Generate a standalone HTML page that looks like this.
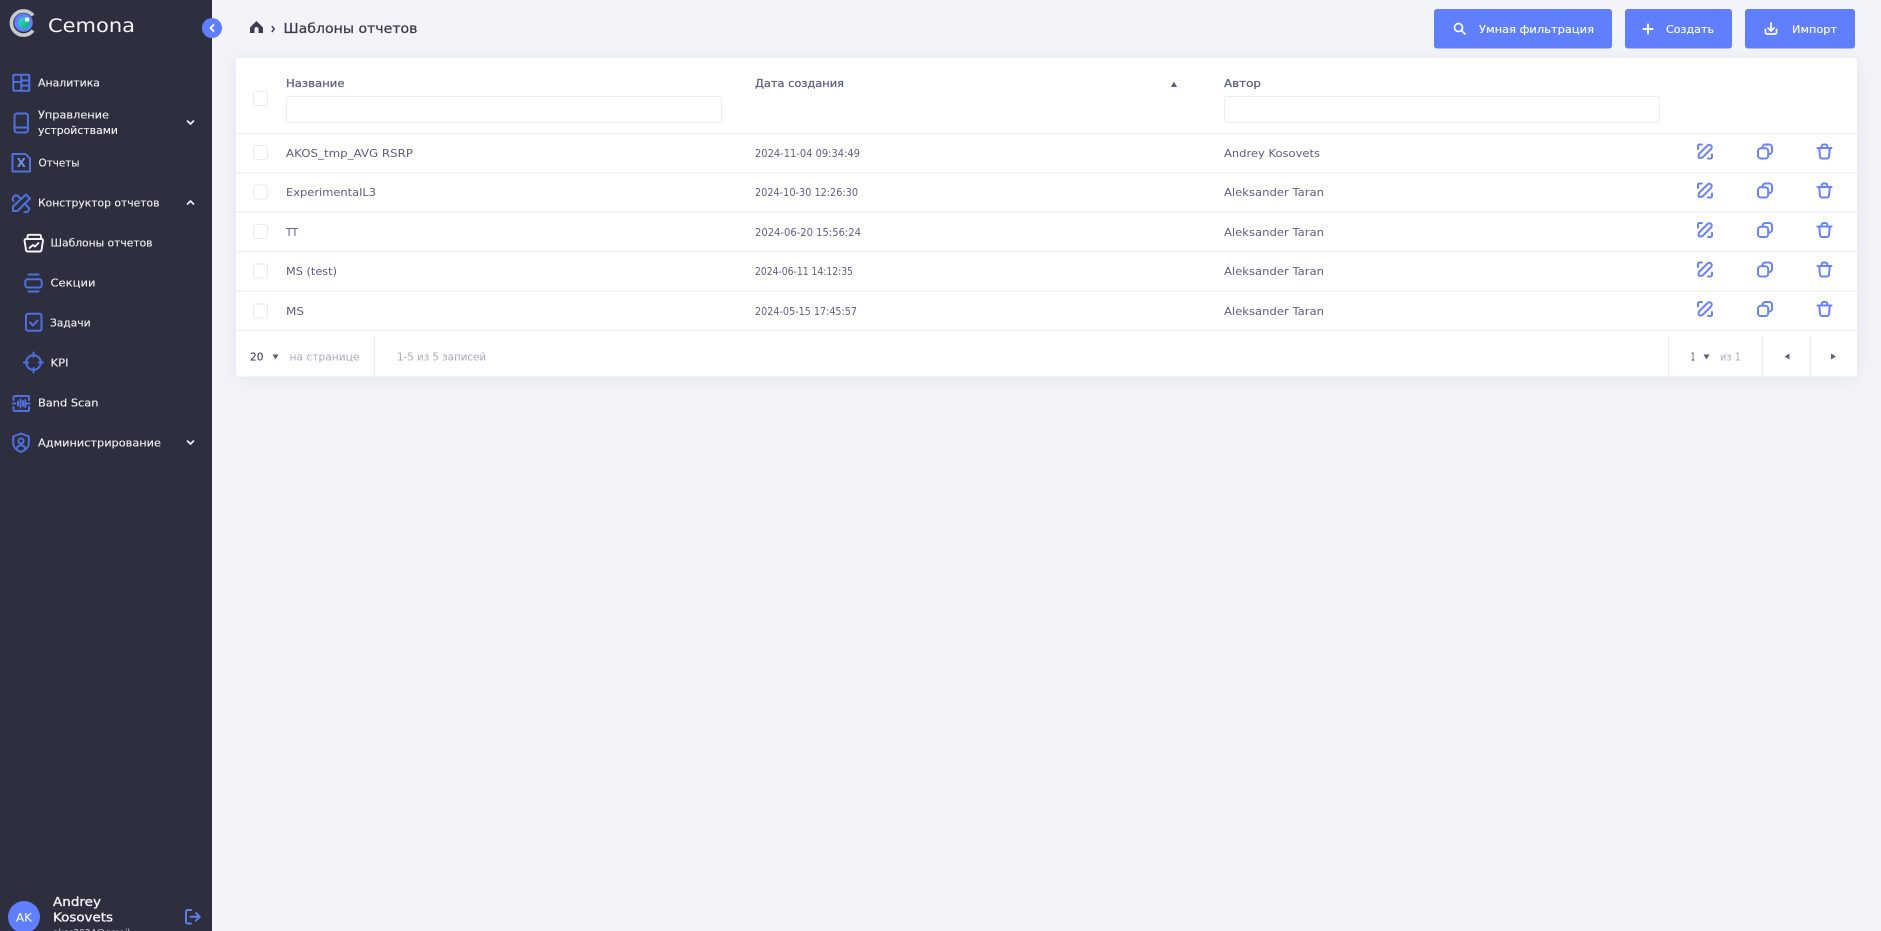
<!DOCTYPE html>
<html lang="ru">
<head>
<meta charset="utf-8">
<title>Шаблоны отчетов</title>
<style>
html,body{margin:0;padding:0;width:1881px;height:931px;overflow:hidden;background:#f3f4f9}
svg{display:block}
text{font-family:"DejaVu Sans","Liberation Sans",sans-serif;font-size:11px}
.nav{fill:#f2f3f7;font-size:11px;stroke:#f2f3f7;stroke-width:.12}
.hd{fill:#5a5e85;font-size:11px;stroke:#5a5e85;stroke-width:.25}
.td{fill:#5c5f82;font-size:11px}
.ft{fill:#a9abbc;font-size:10.5px}
.btn{fill:#fff;font-size:11px;stroke:#fff;stroke-width:.12}
.ic{fill:none;stroke:#4f70e0;stroke-width:2;stroke-linecap:round;stroke-linejoin:round}
.ri{fill:none;stroke:#6a82fb;stroke-width:2;stroke-linecap:round;stroke-linejoin:round}
</style>
</head>
<body>
<svg width="1881" height="931" viewBox="0 0 1881 931" xmlns="http://www.w3.org/2000/svg">
<defs>
<g id="edit" class="ri">
<path d="M-7 -2.5V-5.5A1.5 1.5 0 0 1 -5.5 -7H-3M7 3V5.5A1.5 1.5 0 0 1 5.5 7H3"/>
<path d="M-4.8 6.5A1.5 1.5 0 0 1 -6.5 4.8L-6 2.5L2.5 -6A2.3 2.3 0 0 1 6 -2.5L-2.5 6Z"/>
</g>
<g id="copy" class="ri">
<rect x="-7" y="-3.2" width="10.2" height="10.2" rx="2.8"/>
<path d="M-2.5 -3.7V-4.2A2.8 2.8 0 0 1 0.3 -7H4.2A2.8 2.8 0 0 1 7 -4.2V-0.3A2.8 2.8 0 0 1 4.2 2.5H3.7"/>
</g>
<g id="trash" class="ri">
<path d="M-7 -3.5H7"/>
<path d="M-2.8 -3.5V-5.2A1.8 1.8 0 0 1 -1 -7H1A1.8 1.8 0 0 1 2.8 -5.2V-3.5"/>
<path d="M-5.3 -3.5L-4.5 5A2 2 0 0 0 -2.5 7H2.5A2 2 0 0 0 4.5 5L5.3 -3.5"/>
</g>
<linearGradient id="orb" x1="0" y1="0" x2="1" y2="1"><stop offset="0" stop-color="#2fe0c8"/><stop offset="1" stop-color="#15a58a"/></linearGradient>
</defs>

<rect width="1881" height="931" fill="#f3f4f9"/>

<!-- Sidebar -->
<rect width="212" height="931" fill="#2d2f3f"/>
<!-- logo -->
<path d="M33 15.5A12.1 12.1 0 1 0 33 30.5" fill="none" stroke="#c9cbd0" stroke-width="3.6"/>
<circle cx="23.5" cy="22.5" r="9.3" fill="#5f7fff"/>
<circle cx="24" cy="23" r="5.8" fill="url(#orb)"/>
<circle cx="27" cy="19.5" r="2.3" fill="#e4fffa"/>
<text x="48" y="32" textLength="87" lengthAdjust="spacingAndGlyphs" fill="#f5f5f8" style="font-size:19px">Cemona</text>

<!-- collapse -->
<circle cx="212" cy="28" r="10" fill="#5f7fff"/>
<path d="M213.5 25L210.5 28L213.5 31" fill="none" stroke="#fff" stroke-width="1.8" stroke-linecap="round" stroke-linejoin="round"/>

<!-- nav icons -->
<g class="ic">
<rect x="13.3" y="74.8" width="16" height="16" rx="1"/><path d="M21.3 75V90.6M21.3 80.5H29M21.3 85.5H29M13.5 82H21"/>
<rect x="14.5" y="113.5" width="13.4" height="19" rx="2.5"/><path d="M15 127.5H27.5"/>
<path d="M12.5 154H25.5L30 158.5V171.5H12.5Z"/>
<path d="M26 194.5L30 198.5L17.5 211H13V206.5Z"/>
<path d="M13.5 201A3.6 3.6 0 0 1 17.5 195.5L21 199M24.5 203.5L29 208A3.4 3.4 0 0 1 24.5 212"/>
<path d="M28.5 274.5H38.5M28.5 291.5H38.5"/>
<rect x="25.3" y="279.3" width="16.4" height="8.2" rx="2.2"/>
<rect x="26" y="313.8" width="15.5" height="17" rx="2"/>
<path d="M30 322.5L33 325.5L37.5 320.5"/>
<circle cx="33.5" cy="362.5" r="7.3"/>
<path d="M33.5 352.5V357M33.5 368V372.5M23.8 362.5H28M39 362.5H43"/>
<path d="M13.5 400V397.5A1.5 1.5 0 0 1 15 396H28A1.5 1.5 0 0 1 29 397.5V400M13.5 407V409.5A1.5 1.5 0 0 0 15 411H28A1.5 1.5 0 0 0 29 409.5V407M12.8 403.5H15.5M27 403.5H29.5M18 401.5V405.5M20.5 399.5V407.5M23 401V406M25.3 400V407"/>
<path d="M21 433.5L28.8 436.5V443C28.8 447.5 25 450.5 21 452C17 450.5 13.2 447.5 13.2 443V436.5Z"/>
<circle cx="21" cy="441" r="2.6"/>
<path d="M16.8 448.5C17.5 446 19 445.2 21 445.2C23 445.2 24.5 446 25.2 448.5"/>
</g>
<text x="21.3" y="167" text-anchor="middle" fill="#6f8cf0" style="font-size:12px;font-weight:700">X</text>
<!-- Шаблоны icon -->
<g fill="none" stroke="#f4f5f8" stroke-width="1.9" stroke-linecap="round" stroke-linejoin="round">
<path d="M27.5 238V236.2A1.5 1.5 0 0 1 29 234.8H39.5A1.5 1.5 0 0 1 41 236.2V238"/>
<path d="M24.5 240.5A1.5 1.5 0 0 1 26 239H41.5A1.5 1.5 0 0 1 43 240.5L41.5 250A2 2 0 0 1 39.5 251.5H28A2 2 0 0 1 26 250Z"/>
<path d="M29.5 248L33 245L35 246.5L38.5 243"/>
</g>

<!-- nav text -->
<text class="nav" x="38" y="86.5" textLength="62" lengthAdjust="spacingAndGlyphs">Аналитика</text>
<text class="nav" x="38" y="118.5" textLength="71" lengthAdjust="spacingAndGlyphs">Управление</text>
<text class="nav" x="38" y="134" textLength="80" lengthAdjust="spacingAndGlyphs">устройствами</text>
<text class="nav" x="38.5" y="166.5" textLength="41" lengthAdjust="spacingAndGlyphs">Отчеты</text>
<text class="nav" x="38" y="206.5" textLength="121.5" lengthAdjust="spacingAndGlyphs">Конструктор отчетов</text>
<text class="nav" x="50.5" y="246.5" textLength="102" lengthAdjust="spacingAndGlyphs">Шаблоны отчетов</text>
<text class="nav" x="50.5" y="286.5" textLength="45" lengthAdjust="spacingAndGlyphs">Секции</text>
<text class="nav" x="50" y="326.5" textLength="40.5" lengthAdjust="spacingAndGlyphs">Задачи</text>
<text class="nav" x="50.5" y="366.5" textLength="18" lengthAdjust="spacingAndGlyphs">KPI</text>
<text class="nav" x="38" y="406.5" textLength="60.5" lengthAdjust="spacingAndGlyphs">Band Scan</text>
<text class="nav" x="38" y="446.5" textLength="123" lengthAdjust="spacingAndGlyphs">Администрирование</text>

<!-- chevrons -->
<g fill="none" stroke="#f0f1f5" stroke-width="1.7" stroke-linecap="round" stroke-linejoin="round">
<path d="M187.5 121L190.5 124L193.5 121"/>
<path d="M187.5 204L190.5 201L193.5 204"/>
<path d="M187.5 441L190.5 444L193.5 441"/>
</g>

<!-- user -->
<circle cx="24" cy="917" r="16" fill="#5f7fff"/>
<text x="16" y="921.5" textLength="16" lengthAdjust="spacingAndGlyphs" fill="#fff" style="font-size:11.5px">AK</text>
<text x="53" y="906" textLength="48" lengthAdjust="spacingAndGlyphs" fill="#f5f5f8" stroke="#f5f5f8" stroke-width=".3" style="font-size:12.5px">Andrey</text>
<text x="53" y="921.5" textLength="60" lengthAdjust="spacingAndGlyphs" fill="#f5f5f8" stroke="#f5f5f8" stroke-width=".3" style="font-size:12.5px">Kosovets</text>
<text x="53" y="936" textLength="77" lengthAdjust="spacingAndGlyphs" fill="#c9cad3" style="font-size:9.5px">akos2024@gmail</text>
<g class="ic" style="stroke:#5f7fe8">
<path d="M191 910H187.5A1.5 1.5 0 0 0 186 911.5V922A1.5 1.5 0 0 0 187.5 923.5H191"/>
<path d="M190.5 916.8H199.5M196 913L199.8 916.8L196 920.5"/>
</g>

<!-- breadcrumb -->
<path d="M250 27.5L256.5 21L263 27.5V33H258.5V29A2 2 0 0 0 254.5 29V33H250Z" fill="#3c3d52"/>
<path d="M271.8 26L274.3 29L271.8 32" fill="none" stroke="#3c3d52" stroke-width="1.4"/>
<text x="283.5" y="33" textLength="134" lengthAdjust="spacingAndGlyphs" fill="#3a3b4f" stroke="#3a3b4f" stroke-width=".25" style="font-size:13px">Шаблоны отчетов</text>

<!-- buttons -->
<rect x="1434" y="9" width="178" height="39.5" rx="3" fill="#5f7fff"/>
<rect x="1625" y="9" width="107" height="39.5" rx="3" fill="#5f7fff"/>
<rect x="1745" y="9" width="110" height="39.5" rx="3" fill="#5f7fff"/>
<g fill="none" stroke="#fff" stroke-width="1.7" stroke-linecap="round" stroke-linejoin="round">
<circle cx="1458.5" cy="27.5" r="4"/><path d="M1461.5 30.5L1465 34"/>
<path d="M1648 24.5V33.5M1643.5 29H1652.5" stroke-width="2"/>
<path d="M1771 23V30.5M1768 28L1771 31L1774 28"/>
<path d="M1765.5 29.5V32.5A1.5 1.5 0 0 0 1767 34H1775A1.5 1.5 0 0 0 1776.5 32.5V29.5"/>
</g>
<text class="btn" x="1479" y="33" textLength="115" lengthAdjust="spacingAndGlyphs">Умная фильтрация</text>
<text class="btn" x="1666" y="33" textLength="48" lengthAdjust="spacingAndGlyphs">Создать</text>
<text class="btn" x="1792" y="33" textLength="45" lengthAdjust="spacingAndGlyphs">Импорт</text>

<!-- card -->
<rect x="236" y="58" width="1621" height="318.5" rx="3" fill="#fff" style="filter:drop-shadow(0 2px 7px rgba(60,65,110,.09))"/>

<!-- header -->
<rect x="253.5" y="91.5" width="14" height="14" rx="2.5" fill="#fff" stroke="#e9eaf1"/>
<text class="hd" x="286" y="87" textLength="58.5" lengthAdjust="spacingAndGlyphs">Название</text>
<rect x="286.5" y="96.5" width="435" height="26" rx="2" fill="#fff" stroke="#ececf3"/>
<text class="hd" x="755" y="87" textLength="89" lengthAdjust="spacingAndGlyphs">Дата создания</text>
<path d="M1174 81.5L1177 87H1171Z" fill="#5a5e85"/>
<text class="hd" x="1224" y="87" textLength="37" lengthAdjust="spacingAndGlyphs">Автор</text>
<rect x="1224.5" y="96.5" width="435" height="26" rx="2" fill="#fff" stroke="#ececf3"/>

<!-- row lines -->
<g stroke="#eeeef4" stroke-width="1.2">
<path d="M236 133.5H1857M236 172.8H1857M236 212.2H1857M236 251.5H1857M236 291H1857M236 330.5H1857"/>
</g>

<!-- checkboxes -->
<g fill="#fff" stroke="#e9eaf1">
<rect x="253.5" y="145.5" width="14" height="14" rx="2.5"/>
<rect x="253.5" y="185" width="14" height="14" rx="2.5"/>
<rect x="253.5" y="224.5" width="14" height="14" rx="2.5"/>
<rect x="253.5" y="264" width="14" height="14" rx="2.5"/>
<rect x="253.5" y="304" width="14" height="14" rx="2.5"/>
</g>

<!-- row text -->
<text class="td" x="286" y="157" textLength="127" lengthAdjust="spacingAndGlyphs">AKOS_tmp_AVG RSRP</text>
<text class="td" x="755" y="157" textLength="105" lengthAdjust="spacingAndGlyphs">2024-11-04 09:34:49</text>
<text class="td" x="1224" y="157" textLength="96" lengthAdjust="spacingAndGlyphs">Andrey Kosovets</text>

<text class="td" x="286" y="196" textLength="90" lengthAdjust="spacingAndGlyphs">ExperimentalL3</text>
<text class="td" x="755" y="196" textLength="103" lengthAdjust="spacingAndGlyphs">2024-10-30 12:26:30</text>
<text class="td" x="1224" y="196" textLength="100" lengthAdjust="spacingAndGlyphs">Aleksander Taran</text>

<text class="td" x="286" y="236" textLength="12" lengthAdjust="spacingAndGlyphs">TT</text>
<text class="td" x="755" y="236" textLength="106" lengthAdjust="spacingAndGlyphs">2024-06-20 15:56:24</text>
<text class="td" x="1224" y="236" textLength="100" lengthAdjust="spacingAndGlyphs">Aleksander Taran</text>

<text class="td" x="286" y="275" textLength="51" lengthAdjust="spacingAndGlyphs">MS (test)</text>
<text class="td" x="755" y="275" textLength="98" lengthAdjust="spacingAndGlyphs">2024-06-11 14:12:35</text>
<text class="td" x="1224" y="275" textLength="100" lengthAdjust="spacingAndGlyphs">Aleksander Taran</text>

<text class="td" x="286" y="315" textLength="18" lengthAdjust="spacingAndGlyphs">MS</text>
<text class="td" x="755" y="315" textLength="102" lengthAdjust="spacingAndGlyphs">2024-05-15 17:45:57</text>
<text class="td" x="1224" y="315" textLength="100" lengthAdjust="spacingAndGlyphs">Aleksander Taran</text>

<!-- row icons -->
<use href="#edit" x="1705" y="151.5"/><use href="#copy" x="1765" y="151.5"/><use href="#trash" x="1824.5" y="151.5"/>
<use href="#edit" x="1705" y="190.5"/><use href="#copy" x="1765" y="190.5"/><use href="#trash" x="1824.5" y="190.5"/>
<use href="#edit" x="1705" y="230"/><use href="#copy" x="1765" y="230"/><use href="#trash" x="1824.5" y="230"/>
<use href="#edit" x="1705" y="269.5"/><use href="#copy" x="1765" y="269.5"/><use href="#trash" x="1824.5" y="269.5"/>
<use href="#edit" x="1705" y="309"/><use href="#copy" x="1765" y="309"/><use href="#trash" x="1824.5" y="309"/>

<!-- footer -->
<g stroke="#eaebf1" stroke-width="1">
<path d="M374.5 337V376M1668.5 336V376M1762.5 336V376M1810.5 336V376"/>
</g>
<text x="250" y="360.5" textLength="13.5" lengthAdjust="spacingAndGlyphs" fill="#2d2f3f" style="font-size:11px">20</text>
<path d="M272.5 354.5H278.5L275.5 359.5Z" fill="#5a5e85"/>
<text class="ft" x="289.5" y="360.5" textLength="70" lengthAdjust="spacingAndGlyphs">на странице</text>
<text class="ft" x="397" y="360.5" textLength="89" lengthAdjust="spacingAndGlyphs">1-5 из 5 записей</text>
<text x="1691" y="360.5" textLength="4" lengthAdjust="spacingAndGlyphs" fill="#2d2f3f" style="font-size:11px">1</text>
<path d="M1703.5 354.5H1709.5L1706.5 359.5Z" fill="#5a5e85"/>
<text class="ft" x="1720" y="360.5" textLength="21" lengthAdjust="spacingAndGlyphs">из 1</text>
<path d="M1789.5 353.5V359.5L1784.5 356.5Z" fill="#5f6280"/>
<path d="M1831 353.5V359.5L1836 356.5Z" fill="#5f6280"/>
</svg>
</body>
</html>
